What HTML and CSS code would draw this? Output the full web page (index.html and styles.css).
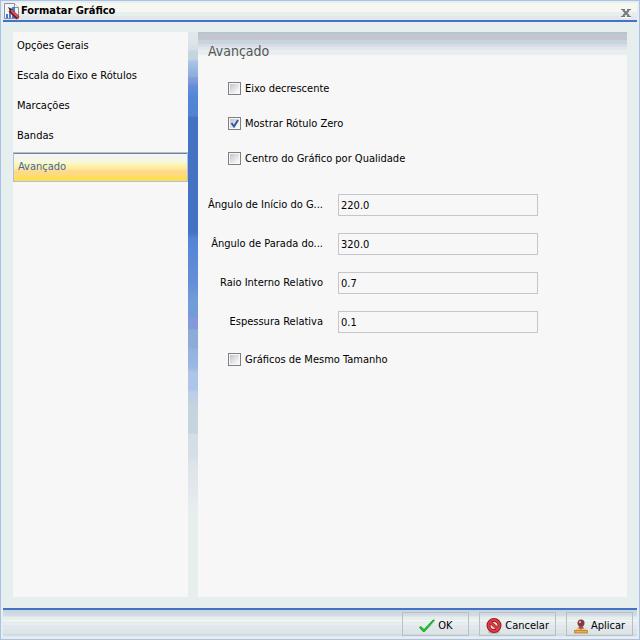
FILE: index.html
```
<!DOCTYPE html>
<html lang="pt-BR">
<head>
    <meta charset="UTF-8">
    <meta name="viewport" content="width=device-width, initial-scale=1.0">
    <title>Formatar Gráfico</title>
    <link rel="stylesheet" href="styles.css">
</head>
<body>
    <div class="dialog">
        <header class="titlebar">
            <svg class="title-icon" width="16" height="17" viewBox="0 0 16 17" aria-hidden="true">
                <path d="M.5.500h10l4 4v11H.5z" fill="#f4f5fa" stroke="#8b8f9a"/>
                <path d="M10.500.500v4h4" fill="#fff" stroke="#8b8f9a"/>
                <path d="M2 11h2v4H2zM5 9h2v6H5zM8 4h3v11H8z" fill="#4a78cc"/>
                <path d="M6 7l8 8" stroke="#7a1a20" stroke-width="4"/>
                <path d="M7 7l7 7" stroke="#e0525a" stroke-width="2"/>
                <path d="M4 4l4 2-2 2z" fill="#222"/>
            </svg>
            <h1>Formatar Gráfico</h1>
            <button type="button" class="close" aria-label="Fechar">
                <svg width="10" height="9" viewBox="0 0 10 9" aria-hidden="true">
                    <path d="M0 8.500h10" stroke="#fff"/>
                    <path d="M0 .5h4M6 .5h4M0 7.500h4M6 7.500h4" stroke="#777"/>
                    <path d="M2 1l6 6M8 1L2 7" stroke="#777" stroke-width="2"/>
                </svg>
            </button>
        </header>

        <main class="body">
            <nav class="menu">
                <a href="#gerais">Opções Gerais</a>
                <a href="#escala">Escala do Eixo e Rótulos</a>
                <a href="#marcacoes">Marcações</a>
                <a href="#bandas">Bandas</a>
                <a href="#avancado" class="selected" aria-current="page">Avançado</a>
            </nav>
            <div class="divider"></div>
            <form class="panel" id="avancado">
                <h2>Avançado</h2>
                <div class="checks">
                    <label class="check"><input type="checkbox"><span>Eixo decrescente</span></label>
                    <label class="check"><input type="checkbox" checked><span>Mostrar Rótulo Zero</span></label>
                    <label class="check"><input type="checkbox"><span>Centro do Gráfico por Qualidade</span></label>
                </div>
                <div class="fields">
                    <label for="inicio">Ângulo de Início do G...</label>
                    <input type="text" id="inicio" value="220.0">
                    <label for="parada">Ângulo de Parada do...</label>
                    <input type="text" id="parada" value="320.0">
                    <label for="raio">Raio Interno Relativo</label>
                    <input type="text" id="raio" value="0.7">
                    <label for="espessura">Espessura Relativa</label>
                    <input type="text" id="espessura" value="0.1">
                </div>
                <label class="check"><input type="checkbox"><span>Gráficos de Mesmo Tamanho</span></label>
            </form>
        </main>

        <footer class="buttons">
            <button type="button">
                <svg width="16" height="14" viewBox="0 0 16 14" aria-hidden="true">
                    <path d="M5 13L15.500 3" stroke="#b9c3c3"/>
                    <path d="M.5 8.500l1.500-1 3 3L14 1h1.500L5.500 12.500H4z" fill="#10d020" stroke="#089010" stroke-width=".7"/>
                </svg>
                OK
            </button>
            <button type="button">
                <svg width="16" height="16" viewBox="0 0 16 16" aria-hidden="true">
                    <ellipse cx="8" cy="14" rx="6" ry="2" fill="#b9bfc4"/>
                    <circle cx="8" cy="7.5" r="5.500" fill="#f0e6e8" stroke="#a0161c" stroke-width="4"/>
                    <path d="M4 4l8 7" stroke="#a0161c" stroke-width="3"/>
                    <circle cx="8" cy="7.5" r="5.500" fill="none" stroke="#dc4046" stroke-width="2"/>
                    <path d="M4 4l8 7" stroke="#dc4046" stroke-width="2"/>
                </svg>
                Cancelar
            </button>
            <button type="button">
                <svg width="14" height="15" viewBox="0 0 14 15" aria-hidden="true">
                    <path d="M5.500 6h3l2 5h-7z" fill="#a05c58"/>
                    <circle cx="7" cy="4" r="3.500" fill="#84383a"/>
                    <circle cx="6" cy="3" r="1.200" fill="#d9a5a3"/>
                    <path d="M2 9.500h3l2 1 2-1h3l1 3H1z" fill="#f6c66a"/>
                    <path d="M.5 11.500h13V14H.5z" fill="#efac4a" stroke="#a8702c" stroke-width=".7"/>
                </svg>
                Aplicar
            </button>
        </footer>
    </div>
</body>
</html>
```
FILE: styles.css
```
* {
    box-sizing: border-box;
}
body {
    margin: 0;
    font-family: "DejaVu Sans Condensed", "Noto Sans", sans-serif;
    font-size: 11px;
    line-height: 16px;
    color: #000;
}
button, input {
    font: inherit;
    color: inherit;
}
.dialog {
    display: flex;
    flex-direction: column;
    min-height: 100vh;
    padding: 2px;
    border: 1px solid #a9c1e8;
    background: #e6efee;
}

/* Title bar */
.titlebar {
    display: flex;
    align-items: center;
    height: 19px;
    border-bottom: 2px solid #4472c4;
    background: linear-gradient(#f7f7f2 9px, #e6efee 9px 13px, #e4e6ee 13px);
}
.title-icon {
    margin-left: 1px;
}
h1 {
    flex: 1;
    margin: 0 1px 2px;
    font-size: 11px;
    line-height: 16px;
}
.close {
    display: flex;
    padding: 4px 6px 0;
    border: 0;
    background: none;
}

/* Menu and panel */
.body {
    display: flex;
    flex: 1;
    padding: 10px 10px 11px;
}
.menu {
    display: flex;
    flex-direction: column;
    width: 175px;
    background: #f7f7f7;
}
.menu a {
    height: 30px;
    padding: 6px 4px;
    color: #000;
    text-decoration: none;
}
.menu .selected {
    border: 1px solid #a9c1e8;
    box-shadow: inset 0 1px #808080;
    background: linear-gradient(#f4f4f4 3px, #f5f8dc 9px, #fff3a0 13px, #ffe9a0 16px, #ffd98a 18px, #ffd98a 21px, #ffdf52 24px, #ffdb5a);
    color: #3b68a8;
}
.divider {
    width: 10px;
    background: linear-gradient(
        #e4e6ee 0, #dce6e6 10px, #d5dde8 18px, #c5d5de 19px 27px,
        #adc5e8 29px, #98b8e2 37px, #8badd5 45px, #8598dc 46px 49px,
        #658ed8 54px, #5285d8 65px, #4f84d0 84px, #4472c4 85px 200px,
        #5285d8 207px, #658ed8 250px, #719cd8 268px 285px,
        #8598dc 286px 297px, #8badd5 298px 316px, #98b0e0 317px,
        #98b8e6 335px, #adc5e8 341px 357px, #bccde8 360px,
        #c5d5de 377px 401px, #d5dde6 402px 422px, #dce6e6 433px,
        #e4e6ee 455px, #e6efee 478px);
}
.panel {
    flex: 1;
    padding: 11px 10px;
    background: linear-gradient(#b5c5ce 2px, #c5c5ce 2px 8px, #c5d5de 8px 10px, #ced0da 10px 12px, #d5dde8 12px 15px, #e4e6ee 15px 18px, #e6efee 18px 23px, #f7f7f7 23px);
}
h2 {
    margin: 0 0 18px;
    font-size: 14px;
    font-weight: normal;
    line-height: 16px;
    color: #555;
}
.checks {
    display: grid;
    gap: 13px;
    margin-bottom: 25px;
}
.check {
    display: flex;
    align-items: center;
    gap: 4px;
    height: 22px;
    padding-left: 20px;
}
.check span {
    padding-top: 2px;
}
.check input {
    width: 13px;
    height: 13px;
    margin: 0;
    border: 1px solid #808080;
    outline: 1px solid #f7f7f7;
    outline-offset: -2px;
    appearance: none;
    background: linear-gradient(135deg, #c5c9d0 15%, #f7f7f7 80%);
}
.check input:checked {
    background: url("data:image/svg+xml,%3Csvg xmlns='http://www.w3.org/2000/svg' viewBox='0 0 11 11'%3E%3Cpath d='M2.500 5L5 8.500 9 2' fill='none' stroke='%23315a9f' stroke-width='2'/%3E%3C/svg%3E"), linear-gradient(135deg, #c5c9d0 15%, #f7f7f7 80%);
}
.fields {
    display: grid;
    grid-template-columns: 115px minmax(0, 200px);
    gap: 17px 15px;
    margin-bottom: 15px;
}
.fields label {
    padding-top: 3px;
    text-align: right;
    white-space: nowrap;
}
.fields input {
    height: 22px;
    padding: 3px 2px 2px;
    border: 1px solid #c5c5ce;
    background: #f7f7f7;
}

/* Bottom buttons */
.buttons {
    display: flex;
    justify-content: flex-end;
    gap: 10px;
    height: 29px;
    padding: 2px 4px 1px 0;
    border-top: 2px solid #4472c4;
    background: linear-gradient(#c5d5de, #d5dde8 6px, #e6efee 7px 10px, #f7f7f7 10px 11px, #e6efee 11px 15px, #e4e6ee 15px 19px, #dce6e6 19px 23px, #ced5e0 25px, #e6efee 27px);
}
.buttons button {
    display: flex;
    align-items: center;
    justify-content: center;
    gap: 3px;
    min-width: 67px;
    height: 24px;
    padding: 4px 6px 0;
    border: 1px solid #bdbdc2;
    background: none;
    white-space: nowrap;
}
```
